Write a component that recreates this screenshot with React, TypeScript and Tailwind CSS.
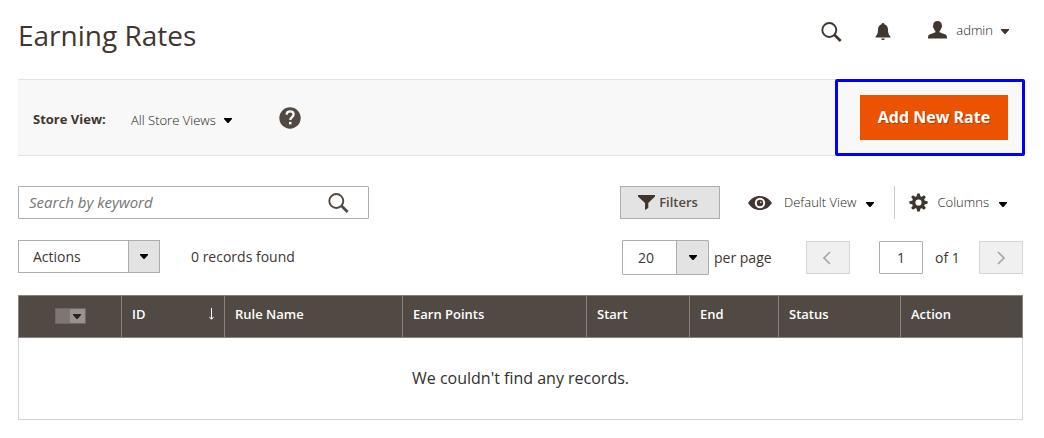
import React, { useState } from 'react';

const Caret: React.FC<{ className?: string }> = ({ className = 'text-black' }) => (
  <svg width="8" height="5" viewBox="0 0 8 5" className={`shrink-0 ${className}`} fill="currentColor" aria-hidden="true">
    <path d="M0 0h8v1L4.5 5h-1L0 1z" />
  </svg>
);

const SearchIcon: React.FC = () => (
  <svg width="21" height="20" viewBox="0 0 21 20" fill="none" stroke="currentColor" aria-hidden="true">
    <circle cx="8.3" cy="8" r="7" strokeWidth="1.9" />
    <path d="M13.3 12.8l6.4 6.2" strokeWidth="2.7" />
  </svg>
);

const BellIcon: React.FC = () => (
  <svg width="16" height="18" viewBox="0 0 16 18" fill="currentColor" aria-hidden="true">
    <path d="M8 0c.8 0 1.300.5 1.400 1.200C11.700 1.900 13 3.800 13 6.400c0 3 .4 5.100 2.400 7.100v.9H.6v-.9C2.600 11.500 3 9.400 3 6.400c0-2.600 1.300-4.500 3.600-5.200C6.700.5 7.200 0 8 0z" />
    <path d="M6.200 15.600h3.600c-.2 1-.9 1.500-1.800 1.500s-1.600-.5-1.800-1.500z" />
  </svg>
);

const UserIcon: React.FC = () => (
  <svg width="19" height="18" viewBox="0 0 19 18" fill="currentColor" aria-hidden="true">
    <path d="M9.500 0c2.800 0 4.300 1.700 4.300 4.200 0 .6.300.7.300 1.400 0 .8-.4 1.300-.8 1.500-.3 1.400-.9 2.300-1.700 3v1.200c2.200 1.200 5.300 1.700 6.600 2.800.7.700.8 2 .8 3.400H0c0-1.400.1-2.700.8-3.400 1.300-1.100 4.400-1.600 6.600-2.800v-1.200c-.8-.7-1.400-1.600-1.700-3-.4-.2-.8-.7-.8-1.500 0-.7.3-.8.3-1.400C5.200 1.700 6.700 0 9.500 0z" />
  </svg>
);

const HelpIcon: React.FC = () => (
  <svg width="22" height="22" viewBox="0 0 22 22" aria-hidden="true">
    <circle cx="11" cy="11" r="10.700" fill="#514943" />
    <path d="M7.600 7.600C7.700 5.500 9 4.400 11.100 4.400c2.100 0 3.500 1.200 3.500 3 0 2.600-3.200 2.700-3.300 5.600" fill="none" stroke="#f8f8f8" strokeWidth="2.300" />
    <path d="M10 14.900h2.500v2.500H10z" fill="#f8f8f8" />
  </svg>
);

const FilterIcon: React.FC = () => (
  <svg width="17" height="15" viewBox="0 0 17 15" fill="currentColor" aria-hidden="true">
    <path d="M0 0h17v1.500L10.300 8v5L7 15V8L0 1.500z" />
  </svg>
);

const EyeIcon: React.FC = () => (
  <svg width="24" height="14" viewBox="0 0 24 14" aria-hidden="true">
    <path d="M0 7c2.800-4.400 7-7 12-7s9.200 2.600 12 7c-2.800 4.400-7 7-12 7S2.800 11.400 0 7z" fill="currentColor" />
    <circle cx="12" cy="7" r="4.200" fill="none" stroke="#fff" strokeWidth="2" />
    <circle cx="12.800" cy="6.200" r=".8" fill="#fff" />
  </svg>
);

const GearIcon: React.FC = () => (
  <svg width="19" height="19" viewBox="0 0 19 19" aria-hidden="true">
    <g fill="currentColor">
      {[0, 45, 90, 135].map(a => (
        <path key={a} d="M8.200.4h2.600l.7 3.600v11l-.7 3.600H8.200L7.500 15V4z" transform={`rotate(${a} 9.500 9.500)`} />
      ))}
      <circle cx="9.500" cy="9.500" r="6.500" />
    </g>
    <circle cx="9.500" cy="9.500" r="3.100" fill="#fff" />
  </svg>
);

const Chevron: React.FC<{ flip?: boolean }> = ({ flip }) => (
  <svg width="8" height="14" viewBox="0 0 8 14" fill="none" stroke="currentColor" strokeWidth="1.600" aria-hidden="true">
    <path d={flip ? 'M1 1l6 6-6 6' : 'M7 1L1 7l6 6'} />
  </svg>
);

const columns = [
  { label: 'ID', width: 'w-[103px]', sorted: true },
  { label: 'Rule Name', width: 'w-[178px]' },
  { label: 'Earn Points', width: 'w-[184px]' },
  { label: 'Start', width: 'w-[103px]' },
  { label: 'End', width: 'w-[89px]' },
  { label: 'Status', width: 'w-[122px]' },
  { label: 'Action', width: 'w-auto' },
];

const Header: React.FC = () => (
  <header className="flex h-[79px] items-start justify-between">
    <h1 className="pt-[15px] text-[28px] leading-10 text-[#41362f]">Earning Rates</h1>
    <div className="flex h-5 items-center mt-[22px] mr-[14px] text-[#41362f]">
      <button type="button" aria-label="Search" className="mr-[33px]"><SearchIcon /></button>
      <button type="button" aria-label="Notifications" className="mr-[37px]"><BellIcon /></button>
      <button type="button" className="flex items-center pb-1 text-[13px] leading-5 font-light">
        <UserIcon />
        <span className="ml-[9px] mr-2 text-[#241a14]">admin</span>
        <Caret className="mt-[2px] text-[#41362f]" />
      </button>
    </div>
  </header>
);

const PageActions: React.FC = () => (
  <div className="flex items-center justify-between border-y border-[#e3e3e3] bg-[#f8f8f8] -mr-px">
    <div className="flex items-center pl-[15px] pt-1">
      <label htmlFor="store" className="w-[98px] text-[13px] font-bold">Store View:</label>
      <div className="relative flex items-center">
        <select id="store" className="appearance-none bg-transparent pr-4 text-[13px] leading-5 font-light text-[#241a14]">
          <option>All Store Views</option>
        </select>
        <Caret className="pointer-events-none absolute right-0 mt-[2px] text-black" />
      </div>
      <a href="#help" aria-label="Help" className="ml-[47px] pb-1"><HelpIcon /></a>
    </div>
    <div className="-my-px -mr-px rounded-xs border-3 border-[#0000ff] py-[13px] pr-[14px] pl-[22px]">
      <button type="button" className="h-[45px] w-[148px] bg-[#eb5202] pb-px text-base font-bold text-white [text-shadow:1px_1px_0_rgba(0,0,0,0.25)]">
        Add New Rate
      </button>
    </div>
  </div>
);

const Toolbar: React.FC = () => {
  const [keyword, setKeyword] = useState('');
  const [page, setPage] = useState('1');

  return (
    <div className="mt-[30px]">
      <div className="flex items-center justify-between">
        <div className="relative flex h-[33px] w-[351px] items-center border border-[#adadad] rounded-[1px]">
          <input
            value={keyword}
            onChange={e => setKeyword(e.target.value)}
            aria-label="Search by keyword"
            placeholder="Search by keyword"
            className="h-full w-full pb-[2px] pl-[10px] pr-14 text-[15px] outline-none placeholder:italic placeholder:text-[#757575]"
          />
          <button type="button" aria-label="Search" className="absolute right-[19px] text-[#514943]"><SearchIcon /></button>
        </div>
        <div className="flex h-[33px] items-center text-[13px] font-light text-[#41362f]">
          <button type="button" className="flex h-full w-[100px] items-center justify-center gap-1 border border-[#adadad] bg-[#e3e3e3] pr-1 text-[13px] font-semibold text-[#514943]">
            <span className="text-[#41362f]"><FilterIcon /></span>
            Filters
          </button>
          <button type="button" className="ml-7 flex items-center">
            <EyeIcon />
            <span className="ml-3 mr-[10px] text-[#241a14]">Default View</span>
            <Caret className="mt-1 text-black" />
          </button>
          <span className="ml-5 h-full w-px bg-[#cccccc]" />
          <button type="button" className="ml-[14px] mr-4 flex items-center">
            <GearIcon />
            <span className="ml-[9px] mr-[10px] text-[#241a14]">Columns</span>
            <Caret className="mt-1 text-black" />
          </button>
        </div>
      </div>

      <div className="mt-[21px] flex items-start justify-between text-sm">
        <div className="flex items-center">
          <div className="relative flex h-[33px] w-[142px] border border-[#adadad]">
            <select aria-label="Actions" className="h-full w-full appearance-none bg-white pl-[14px] text-sm">
              <option>Actions</option>
            </select>
            <span className="pointer-events-none absolute inset-y-0 right-0 flex w-[31px] items-center justify-center border-l border-[#adadad] bg-[#e3e3e3]"><Caret /></span>
          </div>
          <p className="ml-[31px]">0 records found</p>
        </div>
        <div className="flex items-center">
          <div className="relative flex h-[35px] w-[87px] rounded-[1px] border border-[#adadad]">
            <select id="size" className="h-full w-full appearance-none bg-white pl-[15px] text-sm">
              <option>20</option>
              <option>30</option>
              <option>50</option>
            </select>
            <span className="pointer-events-none absolute inset-y-0 right-0 flex w-8 items-center justify-center border-l border-[#adadad] bg-[#e3e3e3]"><Caret /></span>
          </div>
          <label htmlFor="size" className="ml-[5px] w-[92px]">per page</label>
          <button type="button" disabled aria-label="Previous page" className="flex h-[33px] w-11 items-center justify-center border border-[#d6d6d6] bg-[#f0f0f0] pr-[3px] text-[#a8a5a3]"><Chevron /></button>
          <input
            id="page"
            value={page}
            onChange={e => setPage(e.target.value)}
            className="ml-[29px] h-[33px] w-11 rounded-[1px] border border-[#adadad] text-center text-sm outline-none"
          />
          <label htmlFor="page" className="ml-3 w-11">of 1</label>
          <button type="button" disabled aria-label="Next page" className="flex h-[33px] w-11 items-center justify-center border border-[#d6d6d6] bg-[#f0f0f0] text-[#a8a5a3]"><Chevron flip /></button>
        </div>
      </div>
    </div>
  );
};

const App: React.FC = () => (
  <main className="min-h-screen bg-white pl-[18px] pr-[21px] font-['Open_Sans',sans-serif] text-[#41362f]">
    <Header />
    <PageActions />
    <Toolbar />
    <table className="mt-5 w-full table-fixed border-collapse">
      <thead>
        <tr className="h-[42px] bg-[#514943] text-left text-[13px] leading-5 text-white">
          <th className="w-[103px] border border-[#8a837f] pb-px">
            <div className="mx-auto flex h-4 w-[31px] border border-[#6e6763] bg-[#7d7672]">
              <input type="checkbox" aria-label="Select all" className="w-[14px] appearance-none" />
              <button type="button" aria-label="Selection options" className="flex flex-1 items-center justify-center bg-[#989390]"><Caret className="text-[#26221f]" /></button>
            </div>
          </th>
          {columns.map(col => (
            <th key={col.label} className={`${col.width} border border-[#8a837f] px-[10px] pb-[5px] font-semibold`}>
              <div className="flex items-center justify-between">
                {col.label}
                {col.sorted && (
                  <svg width="5" height="12" viewBox="0 0 5 12" stroke="currentColor" fill="none" aria-hidden="true">
                    <path d="M2.500 0v11M.3 8.800l2.200 2.500 2.200-2.500" />
                  </svg>
                )}
              </div>
            </th>
          ))}
        </tr>
      </thead>
      <tbody>
        <tr className="h-[82px]">
          <td colSpan={8} className="border border-[#d6d6d6] pb-[2px] text-center text-base text-[#303030]">We couldn't find any records.</td>
        </tr>
      </tbody>
    </table>
  </main>
);

export default App;
